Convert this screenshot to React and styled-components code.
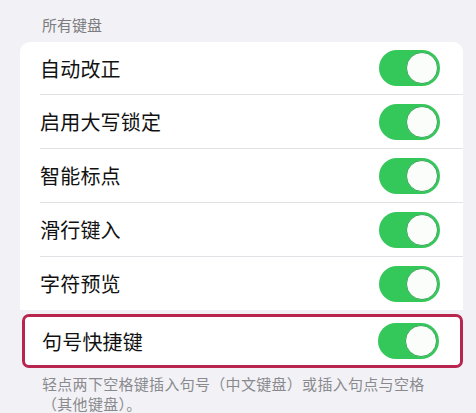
import React from 'react';
import styled, { createGlobalStyle } from 'styled-components';

const GlobalStyle = createGlobalStyle`
  html, body {
    margin: 0;
    padding: 0;
    background: #f2f2f6;
  }
  body {
    font-family: "Noto Sans CJK SC", "Noto Sans", sans-serif;
  }
`;

const rows = ['自动改正', '启用大写锁定', '智能标点', '滑行键入', '字符预览'];

const Toggle = () => (
  <Switch>
    <Knob />
  </Switch>
);

const App = () => {
  return (
    <Page>
      <GlobalStyle />
      <SectionTitle>所有键盘</SectionTitle>
      <Card>
        {rows.map((label, i) => (
          <Row key={label} $first={i === 0}>
            <Label>{label}</Label>
            <Toggle />
          </Row>
        ))}
      </Card>
      <Highlight>
        <Label>句号快捷键</Label>
        <Toggle />
      </Highlight>
      <Footer>轻点两下空格键插入句号（中文键盘）或插入句点与空格（其他键盘）。</Footer>
    </Page>
  );
};

export default App;

const Page = styled.div`
  width: 476px;
  height: 413px;
  overflow: hidden;
  padding: 15px 13px 0 20px;
  box-sizing: border-box;
`;

const SectionTitle = styled.div`
  font-size: 15px;
  line-height: 20px;
  color: #7c7c80;
  padding-left: 22px;
  margin-bottom: 7px;
`;

const Card = styled.div`
  background: #fff;
  border-radius: 10px 10px 0 0;
  padding-left: 20px;
`;

const Row = styled.div`
  display: flex;
  align-items: center;
  justify-content: space-between;
  height: ${(p) => (p.$first ? '52px' : '53px')};
  padding-right: 23px;
  border-top: ${(p) => (p.$first ? 'none' : '1px solid #e2e2e6')};
`;

const Label = styled.span`
  font-size: 20px;
  color: #111;
  letter-spacing: 0.2px;
`;

const Switch = styled.div`
  width: 61px;
  height: 36px;
  border-radius: 18px;
  background: #34c759;
  display: flex;
  align-items: center;
  justify-content: flex-end;
  padding: 2px;
  box-sizing: border-box;
`;

const Knob = styled.div`
  width: 32px;
  height: 32px;
  border-radius: 50%;
  background: #fbfdfb;
  box-sizing: border-box;
  border: 1.5px solid #3aa85a;
`;

const Highlight = styled.div`
  margin: 4px 0 0 2px;
  height: 54px;
  box-sizing: border-box;
  border: 3px solid #b8264f;
  border-radius: 7px;
  background: #fff;
  display: flex;
  align-items: center;
  justify-content: space-between;
  padding: 0 21px 0 17px;
`;

const Footer = styled.div`
  font-size: 15px;
  line-height: 20px;
  letter-spacing: 0.3px;
  color: #8a8a8e;
  padding: 6px 20px 0 22px;
`;
